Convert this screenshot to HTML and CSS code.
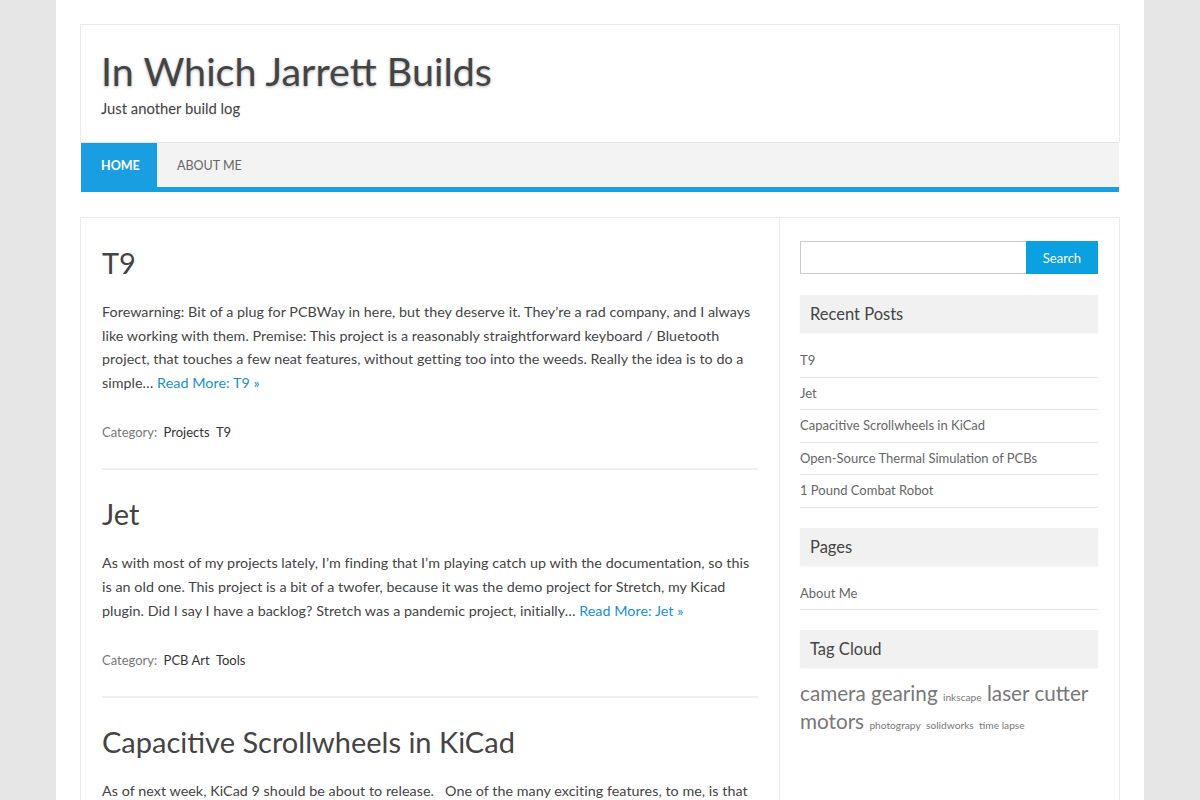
FILE: index.html
```html
<!DOCTYPE html>
<html lang="en">
<head>
    <meta charset="UTF-8">
    <meta name="viewport" content="width=device-width, initial-scale=1.0">
    <title>In Which Jarrett Builds</title>
    <link rel="stylesheet" href="styles.css">
</head>
<body>

<div class="site">

    <!-- Header -->
    <header class="site-header">
        <h1 class="site-title"><a href="#">In Which Jarrett Builds</a></h1>
        <p class="site-description">Just another build log</p>
    </header>

    <nav class="main-nav">
        <a href="#" class="current">Home</a>
        <a href="#">About Me</a>
    </nav>

    <div class="content-wrap">

        <!-- Posts -->
        <main class="content">
            <article class="post">
                <h2 class="entry-title"><a href="#">T9</a></h2>
                <p class="entry-summary">Forewarning: Bit of a plug for PCBWay in here, but they deserve it. They’re a rad company, and I always like working with them. Premise: This project is a reasonably straightforward keyboard / Bluetooth project, that touches a few neat features, without getting too into the weeds. Really the idea is to do a simple… <a href="#" class="more">Read More: T9 »</a></p>
                <div class="entry-meta">Category: <a href="#">Projects</a> <a href="#">T9</a></div>
            </article>

            <article class="post">
                <h2 class="entry-title"><a href="#">Jet</a></h2>
                <p class="entry-summary">As with most of my projects lately, I’m finding that I’m playing catch up with the documentation, so this is an old one. This project is a bit of a twofer, because it was the demo project for Stretch, my Kicad plugin. Did I say I have a backlog? Stretch was a pandemic project, initially… <a href="#" class="more">Read More: Jet »</a></p>
                <div class="entry-meta">Category: <a href="#">PCB Art</a> <a href="#">Tools</a></div>
            </article>

            <article class="post">
                <h2 class="entry-title"><a href="#">Capacitive Scrollwheels in KiCad</a></h2>
                <p class="entry-summary">As of next week, KiCad 9 should be about to release. &nbsp; One of the many exciting features, to me, is that the new plugin system makes it a lot easier to build custom footprints for things like capacitive sliders and wheels… <a href="#" class="more">Read More: Capacitive Scrollwheels in KiCad »</a></p>
            </article>
        </main>

        <!-- Sidebar -->
        <aside class="sidebar">
            <form class="search-form">
                <input type="text" name="s">
                <button type="submit">Search</button>
            </form>

            <div class="widget">
                <h3 class="widget-title">Recent Posts</h3>
                <ul>
                    <li><a href="#">T9</a></li>
                    <li><a href="#">Jet</a></li>
                    <li><a href="#">Capacitive Scrollwheels in KiCad</a></li>
                    <li><a href="#">Open-Source Thermal Simulation of PCBs</a></li>
                    <li><a href="#">1 Pound Combat Robot</a></li>
                </ul>
            </div>

            <div class="widget">
                <h3 class="widget-title">Pages</h3>
                <ul>
                    <li><a href="#">About Me</a></li>
                </ul>
            </div>

            <div class="widget">
                <h3 class="widget-title">Tag Cloud</h3>
                <div class="tagcloud">
                    <a href="#" class="tag-big">camera</a>
                    <a href="#" class="tag-big">gearing</a>
                    <a href="#" class="tag-small">inkscape</a>
                    <a href="#" class="tag-big">laser cutter</a>
                    <a href="#" class="tag-big">motors</a>
                    <a href="#" class="tag-small">photograpy</a>
                    <a href="#" class="tag-small">solidworks</a>
                    <a href="#" class="tag-small">time lapse</a>
                </div>
            </div>
        </aside>

    </div>
</div>

</body>
</html>
```

FILE: styles.css
```css
body {
    font-family: Lato, "Open Sans", sans-serif;
    margin: 0;
    padding: 0;
    background-color: #e6e6e6;
    color: #444;
}
a {
    text-decoration: none;
}
.site {
    width: 1040px;
    margin: 0 auto;
    padding: 24px 24px 0;
    background: #fff;
}

/* header */
.site-header {
    border: 1px solid #ececec;
    border-bottom: none;
    padding: 23px 20px 24px;
}
.site-title {
    margin: 0;
    font-size: 39.5px;
    font-weight: normal;
    line-height: 46px;
}
.site-title a {
    color: #444;
    text-shadow: 0 1px 3px rgba(0, 0, 0, 0.3);
}
.site-description {
    margin: 4px 0 0;
    font-size: 14.8px;
    line-height: 20px;
    color: #444;
    text-shadow: 0 1px 1px rgba(0, 0, 0, 0.1);
}

/* nav */
.main-nav {
    display: flex;
    height: 44px;
    margin: 0 1px;
    background: #f3f3f3;
    border-top: 1px solid #e4e4e4;
    border-bottom: 5px solid #1a9ee2;
}
.main-nav a {
    display: flex;
    align-items: center;
    padding: 0 20px;
    font-size: 12.5px;
    text-transform: uppercase;
    color: #666;
}
.main-nav a.current {
    background: #1a9ee2;
    color: #fff;
    font-weight: bold;
    width: 36px;
}

/* content */
.content-wrap {
    display: flex;
    margin-top: 25px;
    border: 1px solid #ededed;
}
.content {
    width: 656px;
    padding: 2px 21px 0;
}
.post {
    padding: 26px 0 26px;
    border-bottom: 2px solid #f0f0f0;
}
.post + .post {
    padding-top: 27px;
}
.entry-title {
    margin: 0;
    font-size: 29px;
    font-weight: normal;
    line-height: 34px;
}
.entry-title a {
    color: #444;
}
.entry-summary {
    margin: 20px 0 0;
    font-size: 14.3px;
    line-height: 23.6px;
    letter-spacing: 0.05px;
    color: #444;
}
.more {
    color: #168fd6;
}
.entry-meta {
    margin-top: 28px;
    font-size: 13px;
    line-height: 20px;
    color: #777;
}
.entry-meta a {
    color: #333;
    margin-left: 3px;
}

/* sidebar */
.sidebar {
    width: 298px;
    padding: 23px 21px 40px 20px;
    border-left: 1px solid #ededed;
}
.search-form {
    display: flex;
    height: 33px;
    margin-bottom: 21px;
}
.search-form input {
    flex: 1;
    margin: 0;
    border: 1px solid #ccc;
    border-right: none;
    padding: 0 6px;
}
.search-form button {
    width: 72px;
    border: none;
    background: #0ba0e0;
    color: #fff;
    font-family: inherit;
    font-size: 13px;
    cursor: pointer;
}
.widget {
    margin-bottom: 20px;
}
.widget-title {
    margin: 0;
    height: 38px;
    line-height: 38px;
    padding-left: 10px;
    font-size: 16.5px;
    font-weight: normal;
    background: #f1f1f1;
    color: #444;
    box-shadow: 0 1px 2px rgba(0, 0, 0, 0.04);
}
.widget ul {
    list-style: none;
    margin: 12px 0 0;
    padding: 0;
}
.widget li {
    line-height: 31.5px;
    border-bottom: 1px solid #e6e6e6;
    font-size: 13px;
}
.widget li a {
    color: #666;
}
.tagcloud {
    margin-top: 11px;
    font-size: 20.7px;
    line-height: 28px;
}
.tagcloud a {
    color: #777;
}
.tag-big {
    font-size: 20.7px;
}
.tag-small {
    font-size: 10.2px;
    line-height: 1;
}
```
